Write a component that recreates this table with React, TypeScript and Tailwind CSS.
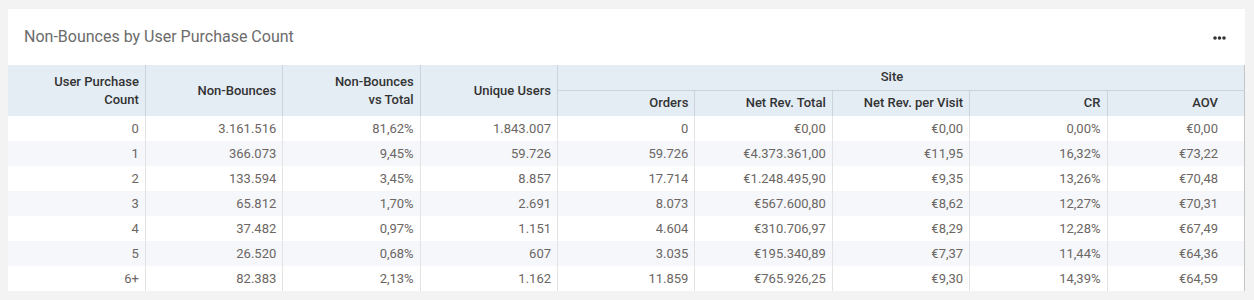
const rows = [
  ["0", "3.161.516", "81,62%", "1.843.007", "0", "€0,00", "€0,00", "0,00%", "€0,00"],
  ["1", "366.073", "9,45%", "59.726", "59.726", "€4.373.361,00", "€11,95", "16,32%", "€73,22"],
  ["2", "133.594", "3,45%", "8.857", "17.714", "€1.248.495,90", "€9,35", "13,26%", "€70,48"],
  ["3", "65.812", "1,70%", "2.691", "8.073", "€567.600,80", "€8,62", "12,27%", "€70,31"],
  ["4", "37.482", "0,97%", "1.151", "4.604", "€310.706,97", "€8,29", "12,28%", "€67,49"],
  ["5", "26.520", "0,68%", "607", "3.035", "€195.340,89", "€7,37", "11,44%", "€64,36"],
  ["6+", "82.383", "2,13%", "1.162", "11.859", "€765.926,25", "€9,30", "14,39%", "€64,59"],
];

const siteCols = ["Orders", "Net Rev. Total", "Net Rev. per Visit", "CR", "AOV"];

export default function App() {
  return (
    <div
      className="min-h-[300px] bg-[#f3f3f3] pt-[9px] pl-[8px]"
      style={{ fontFamily: "Roboto, 'Liberation Sans', sans-serif" }}
    >
      <div className="w-[1237px] bg-white">
        {/* Header */}
        <div className="flex h-[56px] items-center justify-between pl-[16px] pr-[19px]">
          <h2 className="text-[16px] text-[#6b6b6b]">Non-Bounces by User Purchase Count</h2>
          <svg width="13" height="4" viewBox="0 0 13 4" className="mt-[2px]">
            <circle cx="2" cy="2" r="1.8" fill="#333" />
            <circle cx="6.5" cy="2" r="1.8" fill="#333" />
            <circle cx="11" cy="2" r="1.8" fill="#333" />
          </svg>
        </div>

        {/* Table */}
        <table className="w-full table-fixed border-collapse border-r border-r-[#c4c4c4] text-[13px] leading-[18px]">
          <thead className="bg-[#e4ecf4] font-medium text-[#333]">
            <tr className="h-[25px]">
              <th rowSpan={2} className="border-r border-[#cbd4de] pr-[6px] text-right font-medium">
                User Purchase
                <br />
                Count
              </th>
              <th rowSpan={2} className="border-r border-[#cbd4de] pr-[6px] text-right font-medium">
                Non-Bounces
              </th>
              <th rowSpan={2} className="border-r border-[#cbd4de] pr-[6px] text-right font-medium">
                Non-Bounces
                <br />
                vs Total
              </th>
              <th rowSpan={2} className="border-r border-[#cbd4de] pr-[6px] text-right font-medium">
                Unique Users
              </th>
              <th colSpan={5} className="border-b border-[#cbd4de] pr-[18px] text-center font-medium">
                Site
              </th>
            </tr>
            <tr className="h-[26px]">
              {siteCols.map((c, i) => (
                <th
                  key={c}
                  className={`text-right font-medium ${i < 4 ? "border-r border-[#cbd4de] pr-[6px]" : "pr-[26px]"}`}
                >
                  {c}
                </th>
              ))}
            </tr>
          </thead>
          <tbody className="text-[#6b6663]">
            {rows.map((r, ri) => (
              <tr key={ri} className={`h-[25px] ${ri % 2 === 1 ? "bg-[#f5f7fb]" : "bg-white"}`}>
                {r.map((v, ci) => (
                  <td
                    key={ci}
                    className={`text-right ${ci < 8 ? "border-r border-[#e3e3e3] pr-[6px]" : "pr-[26px]"}`}
                  >
                    {v}
                  </td>
                ))}
              </tr>
            ))}
          </tbody>
        </table>
      </div>
    </div>
  );
}
